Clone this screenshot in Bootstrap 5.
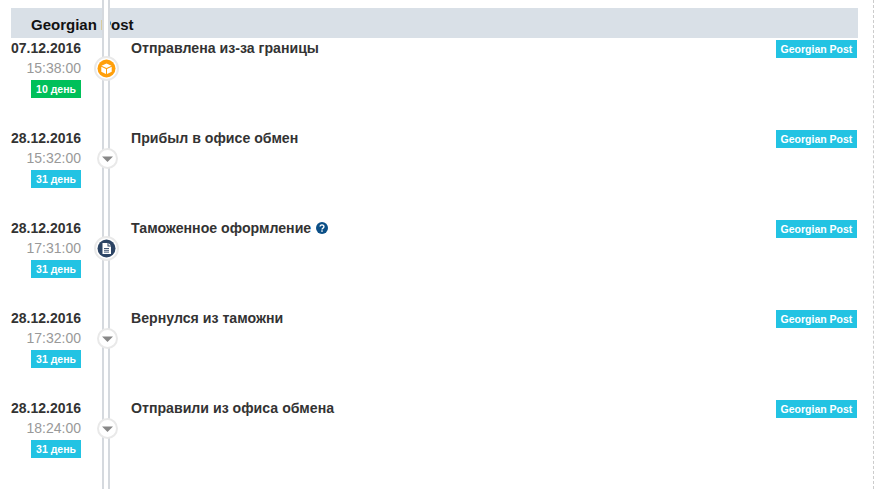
<!DOCTYPE html>
<html lang="ru">
<head>
  <meta charset="UTF-8" />
  <meta name="viewport" content="width=device-width, initial-scale=1">
  <title>Georgian Post</title>
  <link href="https://cdn.jsdelivr.net/npm/bootstrap@5.3.0/dist/css/bootstrap.min.css" rel="stylesheet">
  <style>
    html, body { height: 489px; overflow: hidden; }
    body {
      background: #fff;
      color: #333;
      font-family: "Liberation Sans", Arial, sans-serif;
      font-size: 14px;
    }
    .track-page {
      position: relative;
      width: 874px;
      height: 489px;
      padding: 8px 15px 0 11px;
      border-right: 1px dashed #ccc;
    }
    .track-line {
      position: absolute;
      top: 0;
      bottom: 0;
      left: 102px;
      width: 8px;
      background: #fff;
      border-left: 2px solid #d5d9de;
      border-right: 2px solid #d5d9de;
      z-index: 2;
    }
    .track-head {
      height: 30px;
      padding-left: 20px;
      background: #d9e0e7;
      color: #111;
      font-size: 15px;
      font-weight: 700;
      line-height: 34px;
    }
    .track-row { height: 90px; }
    .when {
      width: 70px;
      flex: none;
      text-align: right;
    }
    .when-date { font-weight: 700; line-height: 20px; margin-bottom: 0; }
    .when-time { color: #999; line-height: 20px; margin-bottom: 0; }
    .days {
      display: inline-block;
      width: 50px;
      height: 18px;
      color: #fff;
      font-size: 10.5px;
      font-weight: 700;
      line-height: 18px;
      text-align: center;
    }
    .days-green { background: #00c05a; }
    .days-blue, .tag { background: #22c3e3; }
    .track-mark { width: 50px; flex: none; position: relative; }
    .dot {
      position: absolute;
      z-index: 3;
      border-radius: 50%;
      background: #fff;
      border: 2px solid #e9e9e9;
    }
    .dot-big { top: 18px; left: 13px; width: 25px; height: 25px; }
    .dot-small { top: 20px; left: 16px; width: 21px; height: 21px; }
    .dot svg { display: block; width: 100%; height: 100%; }
    .step-title { font-size: 14.15px; font-weight: 700; line-height: 20px; }
    .tag {
      width: 81px;
      height: 18px;
      margin: 2px 1px 0 0;
      color: #fff;
      font-size: 10.5px;
      font-weight: 700;
      line-height: 18px;
      text-align: center;
    }
    .help { width: 12px; height: 12px; margin: 0 0 2px 1px; vertical-align: middle; }
  </style>
</head>
<body>

<div class="track-page">
  <div class="track-line"></div>
  <div class="track-head">Georgian Post</div>

  <div class="track-row d-flex">
    <div class="when">
      <p class="when-date">07.12.2016</p>
      <p class="when-time">15:38:00</p>
      <span class="days days-green">10 день</span>
    </div>
    <div class="track-mark">
      <div class="dot dot-big">
        <svg viewBox="0 0 21 21">
          <circle cx="10.500" cy="10.500" r="9" fill="#ff9f0a"/>
          <path d="M10.500 5.500l5 2.300-5 2.300-5-2.300z" fill="#fff"/>
          <path d="M5.300 8.800l4.700 2.200v5l-4.700-2.300zM15.700 8.800l-4.700 2.200v5l4.700-2.300z" fill="#fff"/>
        </svg>
      </div>
    </div>
    <div class="step-title flex-grow-1">Отправлена из-за границы</div>
    <div class="tag">Georgian Post</div>
  </div>

  <div class="track-row d-flex">
    <div class="when">
      <p class="when-date">28.12.2016</p>
      <p class="when-time">15:32:00</p>
      <span class="days days-blue">31 день</span>
    </div>
    <div class="track-mark">
      <div class="dot dot-small">
        <svg viewBox="0 0 17 17"><path d="M3 6.500h11l-5.500 5.500z" fill="#888"/></svg>
      </div>
    </div>
    <div class="step-title flex-grow-1">Прибыл в офисе обмен</div>
    <div class="tag">Georgian Post</div>
  </div>

  <div class="track-row d-flex">
    <div class="when">
      <p class="when-date">28.12.2016</p>
      <p class="when-time">17:31:00</p>
      <span class="days days-blue">31 день</span>
    </div>
    <div class="track-mark">
      <div class="dot dot-big">
        <svg viewBox="0 0 21 21">
          <circle cx="10.500" cy="10.500" r="9" fill="#2c4464"/>
          <path d="M6.500 5h5v3.500h3.500v7.500h-8.500z" fill="#fff"/>
          <path d="M12.500 5l2.500 2.500h-2.500z" fill="#fff"/>
          <path d="M8 10.500h5M8 12.300h5M8 14.100h5" stroke="#2c4464" stroke-width=".9"/>
        </svg>
      </div>
    </div>
    <div class="step-title flex-grow-1">Таможенное оформление
      <svg class="help" viewBox="0 0 13 13">
        <circle cx="6.500" cy="6.500" r="6.500" fill="#0b4f87"/>
        <path d="M4.400 5a2.100 1.900 0 1 1 3.200 1.600c-.8.500-1.100.8-1.100 1.500" fill="none" stroke="#fff" stroke-width="1.500"/>
        <rect x="5.700" y="9" width="1.600" height="1.600" fill="#fff"/>
      </svg>
    </div>
    <div class="tag">Georgian Post</div>
  </div>

  <div class="track-row d-flex">
    <div class="when">
      <p class="when-date">28.12.2016</p>
      <p class="when-time">17:32:00</p>
      <span class="days days-blue">31 день</span>
    </div>
    <div class="track-mark">
      <div class="dot dot-small">
        <svg viewBox="0 0 17 17"><path d="M3 6.500h11l-5.500 5.500z" fill="#888"/></svg>
      </div>
    </div>
    <div class="step-title flex-grow-1">Вернулся из таможни</div>
    <div class="tag">Georgian Post</div>
  </div>

  <div class="track-row d-flex">
    <div class="when">
      <p class="when-date">28.12.2016</p>
      <p class="when-time">18:24:00</p>
      <span class="days days-blue">31 день</span>
    </div>
    <div class="track-mark">
      <div class="dot dot-small">
        <svg viewBox="0 0 17 17"><path d="M3 6.500h11l-5.500 5.500z" fill="#888"/></svg>
      </div>
    </div>
    <div class="step-title flex-grow-1">Отправили из офиса обмена</div>
    <div class="tag">Georgian Post</div>
  </div>
</div>

<script src="https://cdn.jsdelivr.net/npm/bootstrap@5.3.0/dist/js/bootstrap.bundle.min.js"></script>
</body>
</html>
